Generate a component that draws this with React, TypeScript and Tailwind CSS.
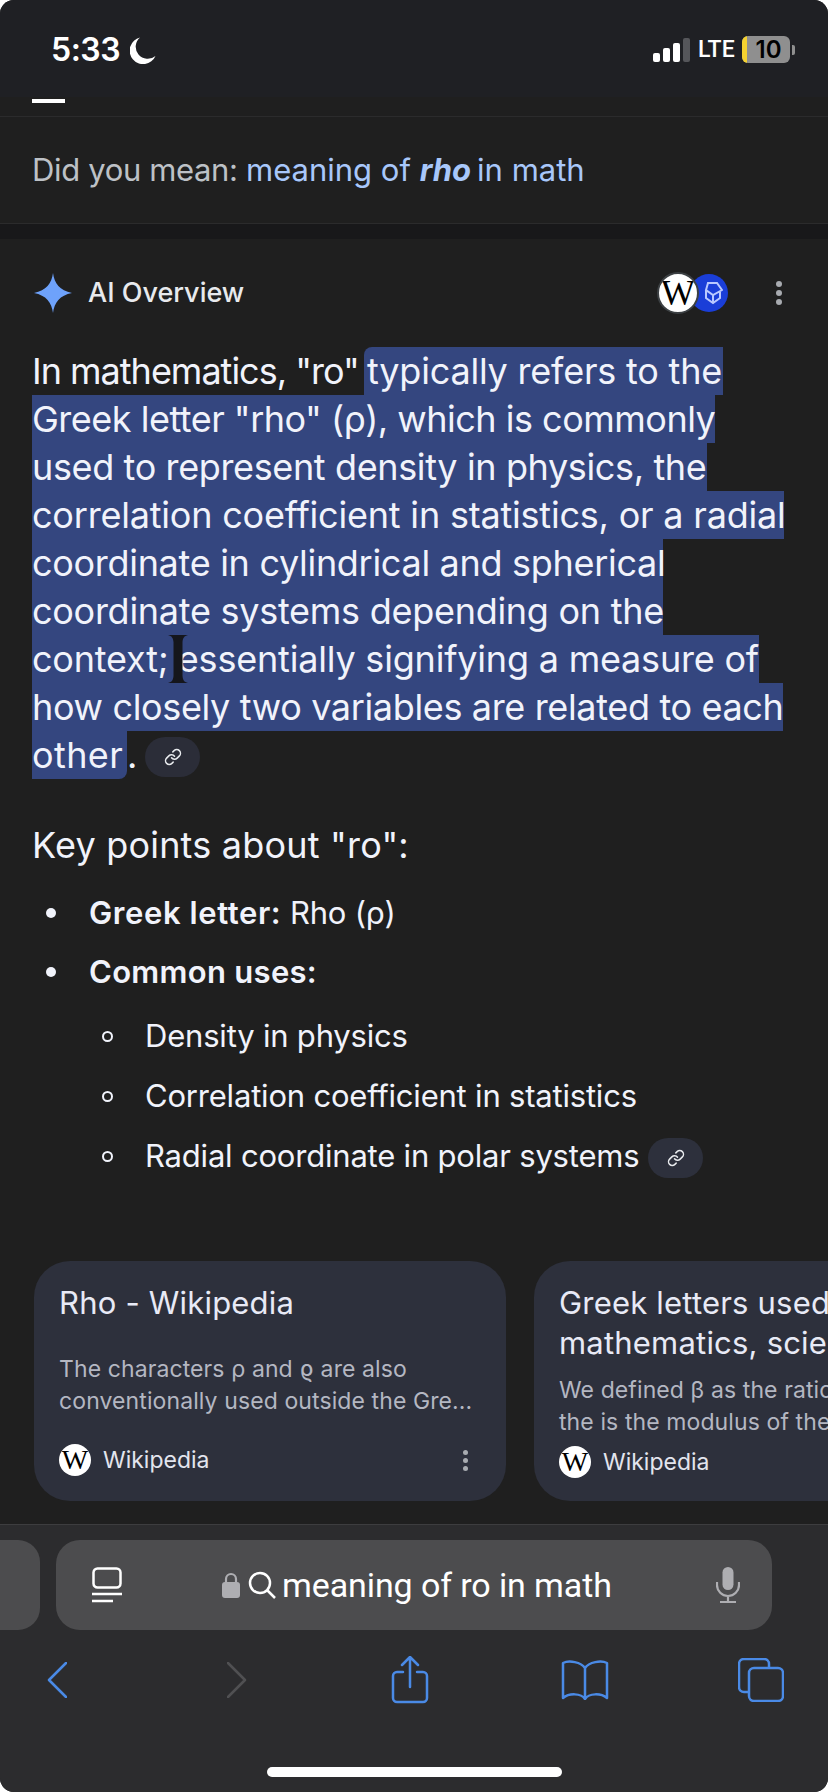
import React from "react";
import { Link as LinkIcon } from "lucide-react";

const overview = [
  { text: "Greek letter \"rho\" (ρ), which is commonly", width: "w-[683px] tracking-[-0.5px]" },
  { text: "used to represent density in physics, the", width: "w-[675px] tracking-[-0.37px]" },
  { text: "correlation coefficient in statistics, or a radial", width: "w-[752px]" },
  { text: "coordinate in cylindrical and spherical", width: "w-[631px] tracking-[-0.3px]" },
  { text: "coordinate systems depending on the", width: "w-[631px] tracking-[-0.27px]" },
];

const LinkPill = ({ className }: { className: string }) => (
  <span className={`flex h-10 w-[55px] shrink-0 items-center justify-center rounded-full ${className}`}>
    <LinkIcon size={18} strokeWidth={2} className="text-[#e8eaed]" />
  </span>
);

const WikiLogo = ({ className, letter }: { className: string; letter: string }) => (
  <span className={`flex shrink-0 items-center justify-center overflow-hidden rounded-full bg-white font-['Liberation_Serif',serif] text-black ${className} ${letter}`}>
    W
  </span>
);

const Dots = ({ className, gap }: { className: string; gap: string }) => (
  <span className={`flex flex-col items-center ${gap}`}>
    <span className={`rounded-full bg-[#a8abb0] ${className}`} />
    <span className={`rounded-full bg-[#a8abb0] ${className}`} />
    <span className={`rounded-full bg-[#a8abb0] ${className}`} />
  </span>
);

const StatusBar = () => (
  <div className="flex h-[97px] shrink-0 items-start justify-between bg-[#1f2024] pl-[51px] pr-[33px] pt-[32px]">
    <div className="flex items-center gap-[10px]">
      <span className="font-['Inter',sans-serif] text-[32px] font-semibold leading-9 tracking-[-0.5px] text-white">5:33</span>
      <svg width="26" height="27" viewBox="0 0 26 27">
        <path d="M10 0.5 A13.5 13.5 0 1 0 25.5 19 A12 12 0 0 1 10 0.5 Z" fill="#fff" />
      </svg>
    </div>
    <div className="flex items-center pt-[4px]">
      <div className="flex items-end gap-[3px]">
        <span className="h-[9px] w-[7px] rounded-[2px] bg-white" />
        <span className="h-[14px] w-[7px] rounded-[2px] bg-white" />
        <span className="h-[19px] w-[7px] rounded-[2px] bg-white" />
        <span className="h-[24px] w-[7px] rounded-[2px] bg-[#55565a]" />
      </div>
      <span className="ml-[8px] w-[35px] font-['Roboto',sans-serif] text-[23px] font-medium leading-6 text-white">LTE</span>
      <div className="ml-[9px] flex h-[27px] w-[48px] items-center overflow-hidden rounded-[6px] bg-[#8f8f8f]">
        <span className="h-full w-[5px] bg-[#f5d230]" />
        <span className="flex-1 text-center font-['Inter',sans-serif] text-[24px] font-semibold leading-6 text-black">10</span>
      </div>
      <span className="ml-[2px] h-[10px] w-[3px] rounded-r-[2px] bg-[#8f8f8f]" />
    </div>
  </div>
);

const App = () => {
  return (
    <div className="h-[1792px] w-[828px] bg-white">
      <div className="relative flex h-full flex-col overflow-hidden rounded-[14px] bg-[#1f1f1f] font-['Inter','Liberation_Sans',sans-serif]">
        <StatusBar />

        <div className="h-[20px] shrink-0 border-b border-[#2b2b2c] pl-[32px] pt-[2px]">
          <div className="h-[4px] w-[33px] bg-white" />
        </div>

        <div className="flex h-[107px] shrink-0 items-center border-b border-[#2b2b2c] pl-[32px] text-[31px] text-[#bdc1c6]">
          <span className="tracking-[-0.35px]">Did you mean:&nbsp;</span>
          <span className="text-[#a8c7fa]">meaning of&nbsp;</span>
          <span className="mr-[6px] font-bold italic text-[#a8c7fa]">rho</span>
          <span className="text-[#a8c7fa]">in math</span>
        </div>
        <div className="h-[15px] shrink-0 bg-[#18181a]" />

        <div className="flex h-[108px] shrink-0 items-center pl-[34px] pr-[46px]">
          <svg width="38" height="40" viewBox="0 0 40 42" className="shrink-0">
            <path d="M20 0 C21.500 11 27 18.500 40 21 C27 23.500 21.500 31 20 42 C18.500 31 13 23.500 0 21 C13 18.500 18.500 11 20 0 Z" fill="#6ea2fb" />
          </svg>
          <span className="ml-[16px] flex-1 text-[27px] font-medium text-[#e8eaed]">AI Overview</span>
          <div className="flex items-center">
            <WikiLogo className="z-10 h-[42px] w-[42px] border-2 border-[#3c4043]" letter="text-[36px]" />
            <span className="-ml-[9px] flex h-[38px] w-[38px] items-center justify-end rounded-full bg-[#1a3ed8] pr-[5px]">
              <svg width="22" height="24" viewBox="0 0 22 24" fill="none" stroke="#b9c8ff" strokeWidth="2">
                <path d="M7 2 L16 2 L21 9 L12 14 L5 9 Z M5 9 L5 17 L12 22 L19 17 L19 11 M12 14 L12 22" />
              </svg>
            </span>
          </div>
          <span className="ml-[48px]"><Dots className="h-[6px] w-[6px]" gap="gap-[3px]" /></span>
        </div>

        <div className="pl-[32px] text-[36px] leading-[48px] tracking-[-0.2px] text-[#f1f3fb]">
          <div className="flex h-12 whitespace-pre">
            <span className="w-[332px] tracking-[-1px]">In mathematics, "ro"</span>
            <span className="h-12 w-[359px] rounded-tl-[8px] bg-[#34467f] pl-[3px]">typically refers to the</span>
          </div>
          {overview.map((line) => (
            <div key={line.text} className={`h-12 whitespace-pre bg-[#34467f] ${line.width}`}>
              {line.text}
            </div>
          ))}
          <div className="relative flex h-12 w-[727px] whitespace-pre bg-[#34467f]">
            <span className="w-[154px]">context;</span>
            <span>essentially signifying a measure of</span>
            <svg width="20" height="48" viewBox="0 0 20 48" className="absolute left-[136px] top-0" fill="#15161c">
              <path d="M0 0 H20 C16 1 15 3 14.500 7 V41 C15 45 16 47 20 48 H0 C4 47 5 45 5.500 41 V7 C5 3 4 1 0 0 Z" />
            </svg>
          </div>
          <div className="h-12 w-[751px] whitespace-pre tracking-[-0.35px] bg-[#34467f]">how closely two variables are related to each</div>
          <div className="flex h-12 items-center">
            <span className="h-12 w-[95px] rounded-br-[8px] bg-[#34467f] tracking-[0.4px]">other</span>
            <span>.</span>
            <LinkPill className="ml-[8px] mt-[4px] bg-[#2b2d38]" />
          </div>
        </div>

        <div className="mt-[42px] pl-[32px] text-[36px] leading-[48px] tracking-[0.2px] text-[#f1f3fb]">Key points about "ro":</div>

        <ul className="mt-[14px] pl-[46px] text-[31px] leading-[40px] tracking-[-0.2px] text-[#f1f3fb]">
          <li className="flex h-[59px] items-center">
            <span className="h-[10px] w-[10px] rounded-full bg-[#f1f3fb]" />
            <span className="ml-[33px]"><b className="font-semibold tracking-[0.6px]">Greek letter:</b> Rho (ρ)</span>
          </li>
          <li className="flex h-[59px] items-center">
            <span className="h-[10px] w-[10px] rounded-full bg-[#f1f3fb]" />
            <span className="ml-[33px] font-semibold tracking-[0.3px]">Common uses:</span>
          </li>
          <ul className="mt-[5px] pl-[56px]">
            {["Density in physics", "Correlation coefficient in statistics", "Radial coordinate in polar systems"].map((item, i) => (
              <li key={item} className="flex h-[60px] items-center">
                <span className="h-[11px] w-[11px] rounded-full border-2 border-[#f1f3fb]" />
                <span className="ml-[32px]">{item}</span>
                {i === 2 && <LinkPill className="ml-[9px] mt-[4px] bg-[#2d303c]" />}
              </li>
            ))}
          </ul>
        </ul>

        <div className="mt-[75px] flex shrink-0 gap-[28px] overflow-hidden pl-[34px]">
          <div className="flex h-[240px] w-[472px] shrink-0 flex-col rounded-[36px] bg-[#2d303c] px-[25px] pt-[22px]">
            <div className="h-[70px] text-[31px] leading-10 tracking-[0.2px] text-[#e8eaf6]">Rho - Wikipedia</div>
            <div className="text-[23px] leading-8 tracking-[0.1px] text-[#b4b7c2]">
              <div>The characters ρ and ϱ are also</div>
              <div>conventionally used outside the Gre...</div>
            </div>
            <div className="mt-[26px] flex items-center">
              <WikiLogo className="h-8 w-8" letter="text-[28px]" />
              <span className="ml-[12px] flex-1 text-[23px] text-[#e3e5ee]">Wikipedia</span>
              <span className="pr-[13px]"><Dots className="h-[5px] w-[5px]" gap="gap-[3px]" /></span>
            </div>
          </div>
          <div className="flex h-[240px] w-[472px] shrink-0 flex-col rounded-[36px] bg-[#2d303c] px-[25px] pt-[22px]">
            <div className="text-[31px] leading-10 tracking-[0.2px] text-[#e8eaf6]">
              <div>Greek letters used</div>
              <div>mathematics, scie</div>
            </div>
            <div className="mt-[11px] text-[23px] leading-8 tracking-[0.1px] text-[#b4b7c2]">
              <div>We defined β as the ratio</div>
              <div>the is the modulus of the</div>
            </div>
            <div className="mt-[7px] flex items-center">
              <WikiLogo className="h-8 w-8" letter="text-[28px]" />
              <span className="ml-[12px] text-[23px] text-[#e3e5ee]">Wikipedia</span>
            </div>
          </div>
        </div>

        <div className="mt-[23px] flex flex-1 flex-col border-t border-[#3d3d3f] bg-[#2c2c2e]">
          <div className="mt-[15px] flex gap-[16px]">
            <div className="h-[90px] w-[40px] shrink-0 rounded-r-[22px] bg-[#4c4c4e]" />
            <div className="flex h-[90px] w-[716px] shrink-0 items-center rounded-[24px] bg-[#4c4c4e] pl-[36px] pr-[32px]">
              <svg width="30" height="36" viewBox="0 0 30 36" fill="none" stroke="#fff" strokeWidth="2.500">
                <rect x="1.500" y="1.500" width="27" height="19" rx="4" />
                <path d="M0 27 H30 M0 34 H21" />
              </svg>
              <div className="ml-[100px] flex flex-1 items-center">
                <svg width="18" height="26" viewBox="0 0 18 26">
                  <path d="M4 11 V7 a5 5 0 0 1 10 0 V11" fill="none" stroke="#aeaeb2" strokeWidth="2.200" />
                  <rect x="0" y="10" width="18" height="16" rx="3" fill="#aeaeb2" />
                </svg>
                <svg width="28" height="28" viewBox="0 0 28 28" fill="none" stroke="#fff" strokeWidth="2.500" className="ml-[8px]">
                  <circle cx="12" cy="12" r="10" />
                  <path d="M19 19 L27 27" />
                </svg>
                <span className="ml-[6px] font-['Roboto',sans-serif] text-[34px] leading-10 tracking-[-0.1px] text-white">meaning of ro in math</span>
              </div>
              <svg width="24" height="36" viewBox="0 0 24 36" fill="none" stroke="#aeaeb2" strokeWidth="2.200">
                <rect x="6.500" y="0" width="11" height="23" rx="5.500" fill="#aeaeb2" stroke="none" />
                <path d="M1 15 V18 a11 11 0 0 0 22 0 V15 M12 29 V35 M4 35 H20" />
              </svg>
            </div>
          </div>

          <div className="mt-[26px] flex h-[48px] items-center pl-[47px]">
            <svg width="20" height="36" viewBox="0 0 20 36" fill="none" stroke="#4a8ae6" strokeWidth="2.500" strokeLinecap="round" strokeLinejoin="round">
              <path d="M19 1 L2 18 L19 35" />
            </svg>
            <svg width="20" height="36" viewBox="0 0 20 36" fill="none" stroke="#505052" strokeWidth="2.500" strokeLinecap="round" strokeLinejoin="round" className="ml-[160px]">
              <path d="M1 1 L18 18 L1 35" />
            </svg>
            <svg width="38" height="48" viewBox="0 0 38 48" fill="none" stroke="#4a8ae6" strokeWidth="2.500" strokeLinecap="round" strokeLinejoin="round" className="ml-[144px]">
              <path d="M12 16 H6 a4 4 0 0 0 -4 4 V42 a4 4 0 0 0 4 4 H32 a4 4 0 0 0 4 -4 V20 a4 4 0 0 0 -4 -4 H26 M19 31 V2 M11 9 L19 1 L27 9" />
            </svg>
            <svg width="48" height="40" viewBox="0 0 48 40" fill="none" stroke="#4a8ae6" strokeWidth="2.500" strokeLinejoin="round" className="ml-[132px]">
              <path d="M24 8 C20 2 8 0 2 3 V38 C8 33 20 33 24 39 C28 33 40 33 46 38 V3 C40 0 28 2 24 8 Z M24 8 V39" />
            </svg>
            <svg width="46" height="44" viewBox="0 0 46 44" fill="none" stroke="#4a8ae6" strokeWidth="2.500" className="ml-[129px]">
              <path d="M10 34 H6 a5 5 0 0 1 -5 -5 V6 a5 5 0 0 1 5 -5 H26 a5 5 0 0 1 5 5 V10" />
              <rect x="11" y="10" width="34" height="33" rx="5" />
            </svg>
          </div>

          <div className="mt-[63px] h-[10px] w-[295px] self-center rounded-full bg-white" />
        </div>
      </div>
    </div>
  );
};

export default App;
